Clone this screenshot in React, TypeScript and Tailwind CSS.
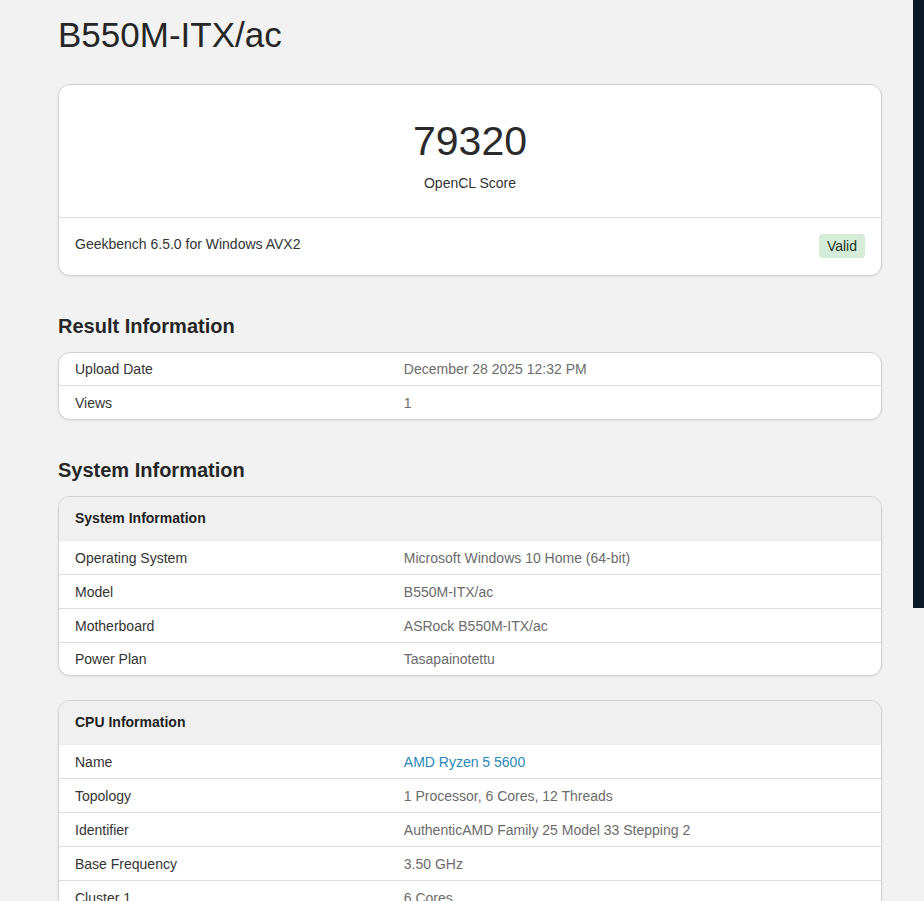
import React from 'react';

type Row = { label: string; value: string; link?: boolean };

const RESULT_ROWS: Row[] = [
  { label: 'Upload Date', value: 'December 28 2025 12:32 PM' },
  { label: 'Views', value: '1' },
];

const SYSTEM_ROWS: Row[] = [
  { label: 'Operating System', value: 'Microsoft Windows 10 Home (64-bit)' },
  { label: 'Model', value: 'B550M-ITX/ac' },
  { label: 'Motherboard', value: 'ASRock B550M-ITX/ac' },
  { label: 'Power Plan', value: 'Tasapainotettu' },
];

const CPU_ROWS: Row[] = [
  { label: 'Name', value: 'AMD Ryzen 5 5600', link: true },
  { label: 'Topology', value: '1 Processor, 6 Cores, 12 Threads' },
  { label: 'Identifier', value: 'AuthenticAMD Family 25 Model 33 Stepping 2' },
  { label: 'Base Frequency', value: '3.50 GHz' },
  { label: 'Cluster 1', value: '6 Cores' },
  { label: 'Maximum Frequency', value: '4467 MHz' },
  { label: 'Package', value: 'Socket AM4' },
];

const Card: React.FC<{ children: React.ReactNode; className?: string }> = ({ children, className }) => (
  <div
    className={`bg-white border border-[#d2d2d2] rounded-[12px] overflow-hidden shadow-[0_1px_3px_rgba(0,0,0,0.08)] ${className ?? ''}`}
  >
    {children}
  </div>
);

const Cells: React.FC<{ row: Row }> = ({ row }) => (
  <>
    <div className="px-4 text-[#333333]">{row.label}</div>
    <div className={`px-4 ${row.link ? 'text-[#2a88b8]' : 'text-[#6b6b6b]'}`}>{row.value}</div>
  </>
);

// Result table: rows separated by a bottom border
const InfoRows: React.FC<{ rows: Row[] }> = ({ rows }) => (
  <>
    {rows.map((r, i) => (
      <div
        key={r.label}
        className={`grid grid-cols-[40%_60%] h-[33px] items-center text-[14px] leading-5 ${
          i < rows.length - 1 ? 'border-b border-[#dddddd]' : ''
        }`}
      >
        <Cells row={r} />
      </div>
    ))}
  </>
);

const SectionTable: React.FC<{ title: string; rows: Row[]; className?: string }> = ({ title, rows, className }) => (
  <Card className={className}>
    {/* Grey table header */}
    <div className="h-[43px] flex items-center px-4 bg-[#f0f0f0] text-[14px] font-bold text-[#222222]">
      {title}
    </div>
    {rows.map((r, i) => (
      <div
        key={r.label}
        className={`grid grid-cols-[40%_60%] items-center text-[14px] leading-5 border-t ${
          i === 0 ? 'border-[#ececec]' : 'border-[#dddddd]'
        } ${i === rows.length - 1 ? 'h-[33px]' : 'h-[34px]'}`}
      >
        <Cells row={r} />
      </div>
    ))}
  </Card>
);

export default function App() {
  return (
    <div
      className="relative min-h-screen bg-[#f2f2f2] text-[#333333]"
      style={{ fontFamily: '"Liberation Sans", Arial, sans-serif' }}
    >
      {/* Dark strip on the right edge */}
      <div className="absolute top-0 right-0 w-[11px] h-[608px] bg-[#0c1a28]" />

      <div className="ml-[58px] w-[824px] pt-[14px] pb-10">
        <h1 className="text-[35px] leading-[42px] text-[#262626]">B550M-ITX/ac</h1>

        {/* Score card */}
        <Card className="mt-[28px]">
          <div className="pt-[30px] pb-[24px] flex flex-col items-center">
            <div className="text-[41px] leading-[53px] text-[#2b2b2b]">79320</div>
            <div className="mt-[5px] text-[14px] leading-5 text-[#333333]">OpenCL Score</div>
          </div>
          <div className="border-t border-[#dddddd] px-4 pt-4 pb-[17px] flex justify-between items-start">
            <div className="text-[14px] leading-5 text-[#333333]">Geekbench 6.5.0 for Windows AVX2</div>
            <span className="h-6 px-2 flex items-center rounded-[4px] bg-[#d5ecd9] text-[14px] text-[#1f3324]">
              Valid
            </span>
          </div>
        </Card>

        <h2 className="mt-[38px] text-[20px] leading-6 font-bold text-[#262626]">Result Information</h2>
        <Card className="mt-[14px]">
          <InfoRows rows={RESULT_ROWS} />
        </Card>

        <h2 className="mt-[38px] text-[20px] leading-6 font-bold text-[#262626]">System Information</h2>
        <SectionTable className="mt-[14px]" title="System Information" rows={SYSTEM_ROWS} />

        <SectionTable className="mt-[24px]" title="CPU Information" rows={CPU_ROWS} />
      </div>
    </div>
  );
}
